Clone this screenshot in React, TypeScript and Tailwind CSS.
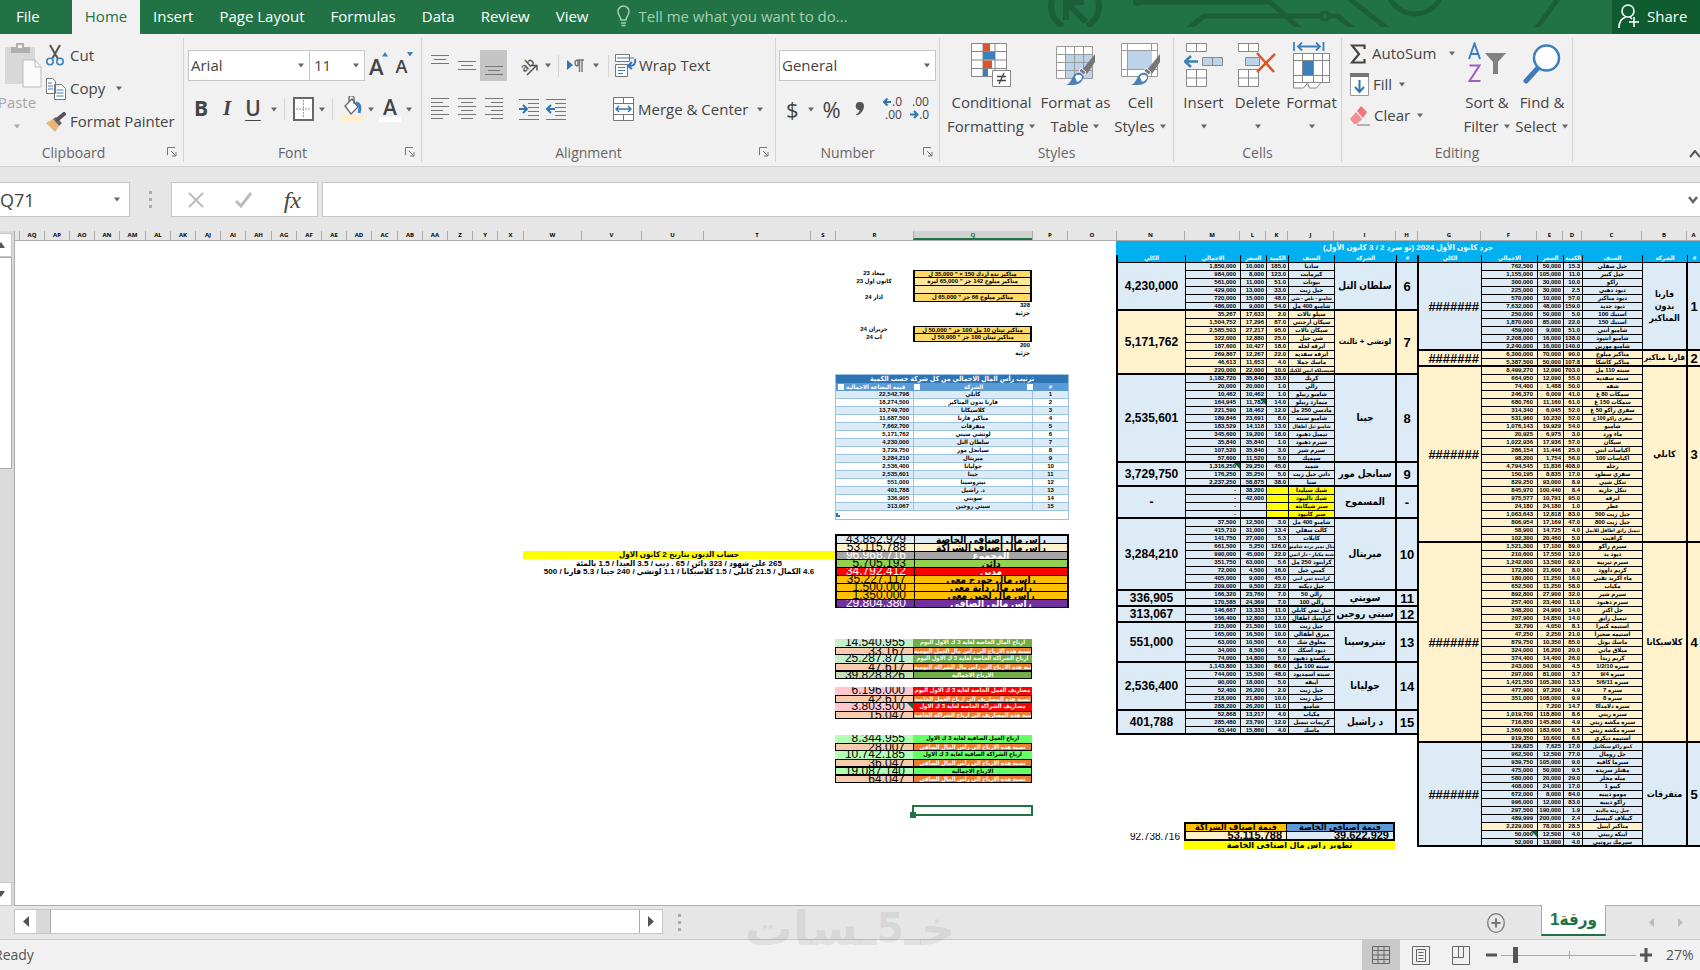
import React from "react"
import { clsx } from "clsx"

type Item = [string, string, string, string]

type Group = {
  id: string
  name: string
  total: string
  tone: "blue" | "sand"
  rows: Item[]
}

const tabs = ["Insert", "Page Layout", "Formulas", "Data", "Review", "View"]

const mainGroups: Group[] = [
  {
    id: "1", name: "فارنا\nبدون\nالمناكير", total: "#######", tone: "blue",
    rows: [
      ["762,500", "50,000", "15.3", "جيل سفلي"],
      ["1,155,000", "105,000", "11.0", "جيل كبير"],
      ["300,000", "30,000", "10.0", "راكو"],
      ["225,000", "30,000", "2.5", "ديود دهبي"],
      ["570,000", "10,000", "57.0", "ديود مناكير"],
      ["7,632,000", "48,000", "159.0", "ديود جديد"],
      ["250,000", "50,000", "5.0", "استيك 100"],
      ["1,870,000", "85,000", "22.0", "استيك 150"],
      ["459,000", "9,000", "51.0", "شامبو انتي"],
      ["2,208,000", "16,000", "138.0", "شامبو انتيود"],
      ["2,240,000", "16,000", "140.0", "شامبو مورين"],
    ],
  },
  {
    id: "2", name: "فارنا مناكير", total: "#######", tone: "sand",
    rows: [
      ["6,300,000", "70,000", "90.0", "مناكير ميلوخ"],
      ["5,387,500", "50,000", "107.8", "مناكير كاشكا"],
    ],
  },
  {
    id: "3", name: "كابلي", total: "#######", tone: "sand",
    rows: [
      ["8,499,270", "12,090", "703.0", "سبته 110 مل"],
      ["664,950", "12,090", "55.0", "سبته سفديه"],
      ["74,400", "1,488", "50.0", "شفه"],
      ["246,370", "6,009", "41.0", "سمكات 80 غ"],
      ["680,760", "11,160", "61.0", "سمكات 150 غ"],
      ["314,340", "6,045", "52.0", "سفري راكو 50 غ"],
      ["531,960", "10,230", "52.0", "سفري راكو 100 غ"],
      ["1,076,143", "19,929", "54.0", "شامبو"],
      ["20,925", "6,975", "3.0", "ماء ورد"],
      ["1,022,936", "17,936", "57.0", "سيكان"],
      ["286,154", "11,446", "25.0", "اكياسات انتي"],
      ["98,200", "1,754", "56.0", "اكياسات 100"],
      ["4,794,545", "11,836", "408.0", "رجله"],
      ["150,195", "8,835", "17.0", "سفري سطود"],
      ["829,250", "93,000", "8.9", "تنكل شيي"],
      ["845,970", "100,440", "8.4", "تنكل جاريه"],
      ["975,577", "10,791", "95.0", "ايرقه"],
      ["24,180", "24,180", "1.0", "عطر"],
      ["1,063,643", "12,818", "83.0", "جيل زيت 500"],
      ["806,954", "17,169", "47.0", "جيل زيت 800"],
      ["58,900", "14,725", "4.0", "تيميل راتق اطافل للايمل"],
      ["102,300", "20,460", "5.0", "كرافيت"],
    ],
  },
  {
    id: "4", name: "كلاسيكانا", total: "#######", tone: "sand",
    rows: [
      ["1,521,300", "17,100", "89.0", "سيرم راكو"],
      ["210,600", "17,550", "12.0", "ديود يد"],
      ["1,242,000", "13,500", "92.0", "سيرم تيرييه"],
      ["172,800", "21,600", "8.0", "كريم داوود"],
      ["180,000", "11,250", "16.0", "ماء اكريد تقني"],
      ["652,500", "11,250", "58.0", "مكياب"],
      ["892,800", "27,900", "32.0", "سيرم شير"],
      ["257,400", "23,400", "11.0", "سيرم دهبود"],
      ["348,200", "24,900", "14.0", "جل اكتر"],
      ["207,900", "14,850", "14.0", "تيميل رايق"],
      ["32,790", "4,050", "8.1", "استيمه كبيرا"],
      ["47,250", "2,250", "21.0", "استيمه صغيرا"],
      ["879,750", "10,350", "85.0", "ماسك بوتل"],
      ["324,000", "16,200", "20.0", "ميلاق ماتي"],
      ["374,400", "14,400", "26.0", "كريم زبدا"],
      ["243,000", "54,000", "4.5", "سبره 1/2/10"],
      ["297,000", "81,000", "3.7", "سبره 9/4"],
      ["1,421,550", "105,300", "13.5", "سبره 5/6/11"],
      ["477,900", "97,200", "4.9", "سبره 7"],
      ["351,000", "108,000", "9.9", "سبره 8"],
      ["", "7,200", "14.7", "سبره دلامدا8"],
      ["1,019,700", "118,800", "8.6", "سبره زيتي"],
      ["716,850", "145,800", "4.9", "سبره مكشه زيتي"],
      ["1,560,600", "183,600", "8.5", "سبره مكشه زيتي"],
      ["919,350", "10,600", "6.6", "استيمه ديكري"],
    ],
  },
  {
    id: "5", name: "متفرقات", total: "#######", tone: "blue",
    rows: [
      ["129,625", "7,625", "17.0", "كيبو راكو سيكاتيل"],
      ["962,500", "12,500", "77.0", "جل رومال"],
      ["939,750", "105,000", "9.0", "سيرما كافيه"],
      ["475,000", "50,000", "9.5", "مقتلز سريده"],
      ["580,000", "20,000", "29.0", "ميله مخلر"],
      ["408,000", "24,000", "17.0", "كيبو 1"],
      ["672,000", "8,000", "84.0", "مومو ديبيه"],
      ["996,000", "12,000", "83.0", "راكو ديبيه"],
      ["297,500", "190,000", "1.9", "جيل زيته ماليبه"],
      ["489,999", "200,000", "2.4", "كيبلاف كبيسيل"],
      ["2,229,000", "78,000", "28.5", "مناكير ايبيل"],
      ["50,000", "12,500", "4.0", "ايبكه ربيتي"],
      ["52,000", "13,000", "4.0", "سيرمك بروتيي"],
    ],
  },
]

const sideGroups: Group[] = [
  {
    id: "6", name: "سلطان التل", total: "4,230,000", tone: "blue",
    rows: [
      ["1,850,000", "10,000", "185.0", "ساديا"],
      ["984,000", "8,000", "123.0", "كيرمايت"],
      ["561,000", "11,000", "51.0", "بيوتات"],
      ["429,000", "13,000", "33.0", "جيل زيت"],
      ["720,000", "15,000", "48.0", "شامبو - بلص - شي"],
      ["486,000", "9,000", "54.0", "شامبو 400 مل"],
    ],
  },
  {
    id: "7", name: "لوتشي + تالنت", total: "5,171,762", tone: "sand",
    rows: [
      ["35,267", "17,633", "2.0", "سيلو تالات"],
      ["1,504,752", "17,296", "87.0", "سيكان ارجنتي"],
      ["2,585,503", "27,217", "95.0", "سيكان تالات"],
      ["322,000", "12,880", "25.0", "شي جيل"],
      ["187,600", "10,427", "18.0", "ايرقه لجله"],
      ["269,867", "12,267", "22.0", "ايرقه سفديه"],
      ["46,613", "11,653", "4.0", "ماسك جملا"],
      ["220,000", "22,000", "10.0", "سيسيلكة ايمن للكيك"],
    ],
  },
  {
    id: "8", name: "جينا", total: "2,535,601", tone: "blue",
    rows: [
      ["1,182,720", "35,840", "33.0", "كريك"],
      ["20,000", "20,000", "1.0", "رالي"],
      ["10,462", "10,462", "1.0", "شامبو ربيلو"],
      ["164,945", "11,782", "14.0", "ميمارد ربيلو"],
      ["221,590", "18,462", "12.0", "مادسي 250 مل"],
      ["189,846", "23,691", "8.0", "شامبو سبته"],
      ["183,529", "14,118", "13.0", "شامبو تيل اطفال"],
      ["345,600", "19,200", "18.0", "تيميل دهبود"],
      ["35,840", "35,840", "1.0", "سيرم دهبود"],
      ["107,520", "35,840", "3.0", "سيرم شير"],
      ["57,600", "11,520", "5.0", "سيميك"],
    ],
  },
  {
    id: "9", name: "سيانجل مور", total: "3,729,750", tone: "blue",
    rows: [
      ["1,316,250", "29,250", "45.0", "شميد"],
      ["176,250", "35,250", "5.0", "داتي جيل زيت"],
      ["2,237,250", "58,875", "38.0", "سبا"],
    ],
  },
  {
    id: "-", name: "المسموح", total: "-", tone: "blue",
    rows: [
      ["-", "38,200", "", "شيك سيليدا"],
      ["-", "42,000", "", "شيك تالييود"],
      ["-", "", "", "سبر شيكابته"],
      ["-", "", "", "سبر كابيود"],
    ],
  },
  {
    id: "10", name: "ميريتال", total: "3,284,210", tone: "blue",
    rows: [
      ["37,500", "12,500", "3.0", "شامبو 400 مل"],
      ["415,710", "31,000", "13.4", "كالت سفلي"],
      ["141,750", "27,000", "5.3", "كابلات"],
      ["661,500", "5,250", "126.0", "ميتال نمير برده شامبو"],
      ["990,000", "45,000", "22.0", "شبه مكياز - دار انمي"],
      ["351,750", "63,000", "5.6", "كرابتود 250 مل"],
      ["72,000", "4,500", "16.0", "كمبي جيل"],
      ["405,000", "9,000", "45.0", "كرابيده تمي انبي"],
      ["209,000", "9,500", "22.0", "جيل ديكته"],
    ],
  },
  {
    id: "11", name: "سويتي", total: "336,905", tone: "blue",
    rows: [
      ["166,320", "23,760", "7.0", "رالي 50"],
      ["170,585", "24,369", "7.0", "رالي 100"],
    ],
  },
  {
    id: "12", name: "سيتي روجين", total: "313,067", tone: "blue",
    rows: [
      ["146,667", "13,333", "11.0", "جيل تمي كابلي"],
      ["166,400", "12,800", "13.0", "كرابتيك اطفال"],
    ],
  },
  {
    id: "13", name: "نيتروسينا", total: "551,000", tone: "blue",
    rows: [
      ["215,000", "21,500", "10.0", "جيل زيت"],
      ["165,000", "16,500", "10.0", "ميزق اطفالي"],
      ["63,000", "10,500", "6.0", "معلوق شك"],
      ["34,000", "8,500", "4.0", "ديود اسكك"],
      ["74,000", "14,800", "5.0", "ميكسدو دهبود"],
    ],
  },
  {
    id: "14", name: "جوليانا", total: "2,536,400", tone: "blue",
    rows: [
      ["1,143,800", "13,300", "86.0", "سبته 100 مل"],
      ["744,000", "15,500", "48.0", "سبته اسمديود"],
      ["90,000", "18,000", "5.0", "ايبقه"],
      ["52,400", "26,200", "2.0", "جيل زيت"],
      ["218,000", "21,800", "10.0", "جيل زيت"],
      ["288,200", "26,200", "11.0", "شامبو"],
    ],
  },
  {
    id: "15", name: "د راشيل", total: "401,788", tone: "blue",
    rows: [
      ["52,868", "13,217", "4.0", "مكياب"],
      ["285,480", "23,790", "12.0", "كريمات تيميل"],
      ["63,440", "15,860", "4.0", "ماسك"],
    ],
  },
]

const companies: [string, string][] = [
  ["22,542,798", "كابلي"],
  ["18,274,500", "فارنا بدون المناكير"],
  ["13,749,700", "كلاسيكانا"],
  ["11,687,500", "مناكير فارنا"],
  ["7,662,700", "متفرقات"],
  ["5,171,762", "لوتشي سيتي"],
  ["4,230,000", "سلطان التل"],
  ["3,729,750", "سيانجل مور"],
  ["3,284,210", "ميريتال"],
  ["2,536,400", "جوليانا"],
  ["2,535,601", "جينا"],
  ["551,000", "نيتروسينا"],
  ["401,788", "د. راشيل"],
  ["336,905", "سويتي"],
  ["313,067", "سيتي روجين"],
]

const deals: { note: string; text: string; kind: "gold" | "sand" | "plain" }[] = [
  { note: "23 ميعاد", text: "مناكير نده اردك 150 × \" 35,000 ل", kind: "gold" },
  { note: "23 كانون اول", text: "مناكير ميلوخ 142 جز \" 65,000 ليرة", kind: "sand" },
  { note: "", text: "", kind: "sand" },
  { note: "24 اذار", text: "مناكير ميلوخ 66 جز \" 65,000 ل", kind: "gold" },
  { note: "", text: "328", kind: "plain" },
  { note: "", text: "جزئية", kind: "plain" },
  { note: "", text: "", kind: "plain" },
  { note: "24 حزيران", text: "مناكير تيتان 10 مل 100 جز \" 50,000 ل", kind: "gold" },
  { note: "24 اب", text: "مناكير تيتان 100 جز \" 50,000 ل", kind: "gold" },
  { note: "", text: "200", kind: "plain" },
  { note: "", text: "جزئية", kind: "plain" },
]

const capital = [
  { value: "43,852,929", label: "رأس مال اصنافي الخاصة", tone: "bg-[#ddebf7] text-black" },
  { value: "53,115,788", label: "رأس مال اصناف الشراكة", tone: "bg-[#fff2cc] text-black" },
  { value: "96,968,716", label: "المجموع", tone: "bg-[#a6a6a6] text-white" },
  { value: "5,705,193", label: "دائن", tone: "bg-[#92d050] text-black" },
  { value: "34,792,412", label: "مدين", tone: "bg-[#ff0000] text-white" },
  { value: "35,227,117", label: "رأس مال جورج معي", tone: "bg-[#ffc000] text-black" },
  { value: "1,500,000", label: "رأس مال دانة معي", tone: "bg-[#ffc000] text-black" },
  { value: "1,350,000", label: "رأس مال لجين معي", tone: "bg-[#ffc000] text-black" },
  { value: "29,804,380", label: "رأس مالي الصافي", tone: "bg-[#7030a0] text-white" },
]

type Profit = { value: string; label: string; left: string; right: string; boxed?: boolean; flag?: boolean }

const orange = "bg-[#ed7d31] text-white"
const peach = "bg-[#f8cbad]"

const yearly: Profit[] = [
  { value: "14,540,955", label: "ارباح المال الخاصة لغاية 3 ك الاول اليوم", left: "bg-[#c6efce]", right: "bg-[#70ad47] text-white" },
  { value: "33,167", label: "نسبة هذه الارباح الى رأس مال العمل اليومية", left: peach, right: orange, boxed: true },
  { value: "25,287,871", label: "ارباح الشراكة الخاصة لغاية 3 ك الاول اليوم", left: "bg-[#c6efce]", right: "bg-[#70ad47] text-white" },
  { value: "47,617", label: "نسبة هذه الارباح الى رأس مال الشراكة اليومية", left: peach, right: orange, boxed: true },
  { value: "39,828,826", label: "الارباح الاجمالية", left: "bg-[#c6e0b4]", right: "bg-[#70ad47] text-white", boxed: true },
]

const expenses: Profit[] = [
  { value: "6,196,000", label: "مصاريف العمل الخاصة لغاية 3 ك الاول اليوم", left: "bg-[#ffc7ce]", right: "bg-[#ff0000] text-white" },
  { value: "42,617", label: "نسبة هذه المصاريف الى ارباح العمل الخاصة", left: peach, right: orange, boxed: true },
  { value: "3,803,500", label: "مصاريف الشراكة الخاصة لغاية 3 ك الاول", left: "bg-[#ffc7ce]", right: "bg-[#ff0000] text-white", flag: true },
  { value: "15,047", label: "نسبة هذه المصاريف الى ارباح الشراكة الخاصة", left: peach, right: orange, boxed: true },
]

const net: Profit[] = [
  { value: "8,344,955", label: "ارباح العمل الصافية لغاية 3 ك الاول", left: "bg-[#b3ffb3]", right: "bg-[#66ff66] text-black" },
  { value: "28,007", label: "نسبة هذه الارباح الى رأس المال الصافي", left: peach, right: orange, boxed: true },
  { value: "10,742,185", label: "ارباح الشراكة الصافية لغاية 3 ك الاول", left: "bg-[#b3ffb3]", right: "bg-[#66ff66] text-black" },
  { value: "36,047", label: "نسبة هذه الارباح الى رأس المال الصافي", left: peach, right: orange, boxed: true },
  { value: "19,087,140", label: "الارباح الاجمالية", left: "bg-[#b3ffb3]", right: "bg-[#66ff66] text-black", boxed: true },
  { value: "64,047", label: "نسبة هذه الارباح الى رأس المال الصافي", left: peach, right: orange, boxed: true },
]

// Sheet runs right to left, so the widths are listed from AQ down to A
const columns: [string, string][] = [
  ["AQ", "w-[25px]"], ["AP", "w-[25px]"], ["AO", "w-[25px]"], ["AN", "w-[25px]"], ["AM", "w-[26px]"],
  ["AL", "w-[25px]"], ["AK", "w-[25px]"], ["AJ", "w-[25px]"], ["AI", "w-[25px]"], ["AH", "w-[26px]"],
  ["AG", "w-[25px]"], ["AF", "w-[25px]"], ["AE", "w-[25px]"], ["AD", "w-[25px]"], ["AC", "w-[26px]"],
  ["AB", "w-[25px]"], ["AA", "w-[25px]"], ["Z", "w-[25px]"], ["Y", "w-[25px]"], ["X", "w-[26px]"],
  ["W", "w-[58px]"], ["V", "w-[60px]"], ["U", "w-[62px]"], ["T", "w-[107px]"], ["S", "w-[25px]"],
  ["R", "w-[78px]"], ["Q", "w-[119px]"], ["P", "w-[35px]"], ["O", "w-[49px]"], ["N", "w-[68px]"],
  ["M", "w-[55px]"], ["L", "w-[26px]"], ["K", "w-[22px]"], ["J", "w-[46px]"], ["I", "w-[62px]"],
  ["H", "w-[22px]"], ["G", "w-[63px]"], ["F", "w-[56px]"], ["E", "w-[26px]"], ["D", "w-[19px]"],
  ["C", "w-[60px]"], ["B", "w-[45px]"], ["A", "w-[14px]"],
]

function Caret({ className = "" }: { className?: string }) {
  return (
    <svg width="8" height="5" viewBox="0 0 8 5" className={clsx("shrink-0", className)}>
      <path d="M1 0.5h6L4 4.5z" fill="#666" />
    </svg>
  )
}

function Rule() {
  return <span className="h-[22px] w-px bg-[#d4d4d4]" />
}

function RibbonGroup({ label, width, shift, launcher, children }: { label: string; width: string; shift?: string; launcher?: boolean; children: React.ReactNode }) {
  return (
    <section className={clsx("mt-1 flex h-[124px] shrink-0 flex-col border-r border-[#d4d4d4]", width)}>
      <div className="h-[107px]">{children}</div>
      <div className={clsx("relative text-center text-sm leading-[19px] text-[#666]", shift)}>
        {label}
        {launcher && (
          <button aria-label={label + " settings"} className="absolute right-1.5 top-1">
            <svg width="10" height="10" viewBox="0 0 10 10" fill="none" stroke="#777">
              <path d="M0.5 8V0.5H8M4 4l5 5M9 5v4H5" />
            </svg>
          </button>
        )}
      </div>
    </section>
  )
}

function BigButton({ icon, lines, width, caretBelow }: { icon: React.ReactNode; lines: string[]; width: string; caretBelow?: boolean }) {
  return (
    <button className={clsx("flex shrink-0 flex-col items-center whitespace-nowrap leading-6", width)}>
      <span className="flex h-[52px] items-start pt-1">{icon}</span>
      <span>{lines[0]}</span>
      {caretBelow ? (
        <Caret className="mt-2.5" />
      ) : (
        <span className="flex items-center gap-1">
          {lines[1]}
          <Caret />
        </span>
      )}
    </button>
  )
}

function Lines({ widths, align = "center" }: { widths: number[]; align?: "left" | "center" | "right" }) {
  return (
    <svg width="18" height={widths.length * 4} viewBox={`0 0 18 ${widths.length * 4}`} stroke="#777">
      {widths.map((w, i) => {
        const x = align === "left" ? 0 : align === "right" ? 18 - w : (18 - w) / 2
        return <path key={i} d={`M${x} ${i * 4 + 1.5}h${w}`} />
      })}
    </svg>
  )
}

function TitleBar() {
  return (
    <header className="relative flex h-[34px] items-stretch bg-[#217346] text-[15px] text-white">
      <svg width="560" height="27" viewBox="1040 0 560 27" className="absolute right-[100px] top-0" fill="none" stroke="#1b5f39" strokeWidth="5">
        <path d="M1063 26A22 22 0 0 1 1052 0M1087 26A22 22 0 0 0 1098 0" strokeWidth="6" />
        <path d="M1086 22L1068 4M1066 20V2H1084" strokeWidth="6" />
        <circle cx="1137" cy="2" r="4" fill="#1b5f39" stroke="none" />
        <path d="M1137 2H1270L1300 29M1188 29L1204 16H1321M1330 16H1338L1353 29M1346 -4L1388 29M1560 -4L1536 29" />
        <circle cx="1325" cy="16" r="4" strokeWidth="3" />
        <circle cx="1415" cy="-14" r="28" />
      </svg>
      <button className="w-[72px] pb-0.5 pl-4 text-left">File</button>
      <button className="w-[68px] bg-[#f1f1f1] pb-0.5 text-[#217346]">Home</button>
      {tabs.map((t) => (
        <button key={t} className="px-[13px] pb-0.5">{t}</button>
      ))}
      <button className="ml-4 flex items-center gap-2 pb-0.5 text-[#a8cdb7]">
        <svg width="13" height="22" viewBox="0 0 13 22" fill="none" stroke="#a8cdb7" strokeWidth="1.5">
          <path d="M4 15c0-3-3-4.500-3-8.500a5.500 5.500 0 0 1 11 0c0 4-3 5.500-3 8.500zM4 18h5M4.500 20.500h4" />
        </svg>
        Tell me what you want to do...
      </button>
      <button className="relative ml-auto flex w-[88px] items-center gap-2 bg-[#0e5c2f] pb-0.5 pl-1.5">
        <svg width="21" height="25" viewBox="0 0 21 25" fill="none" stroke="#fff" strokeWidth="1.600">
          <circle cx="10" cy="7" r="6" />
          <path d="M1 24c0-6 3-10 7-11M12 13l2 2M16 13v10M11 18h10" />
        </svg>
        Share
      </button>
    </header>
  )
}

function ClipboardGroup() {
  return (
    <RibbonGroup label="Clipboard" width="w-[184px]" shift="pr-9" launcher>
      <div className="flex">
        <button className="flex w-[46px] shrink-0 flex-col items-center pt-1 leading-6 text-[#a6a6a6]">
          <svg width="38" height="48" viewBox="0 0 38 48">
            <path d="M1 5h30v37H1z" fill="#d8d8d8" />
            <path d="M7 5h5V1h8v4h6v6H7z" fill="#b0b0b0" />
            <path d="M14 3h4v3h-4z" fill="#f1f1f1" />
            <path d="M19 18h12l6 7v20H19z" fill="#fafafa" stroke="#bdbdbd" />
            <path d="M31 18v7h6" fill="none" stroke="#bdbdbd" />
          </svg>
          <span className="-ml-3">Paste</span>
          <Caret className="-ml-3 mt-2.5 opacity-50" />
        </button>
        <div className="flex flex-col whitespace-nowrap">
          <button className="flex h-[34px] items-center gap-1.5">
            <svg width="18" height="22" viewBox="0 0 18 22" fill="none">
              <path d="M4 1l8 14M14 1L6 15" stroke="#555" strokeWidth="2" />
              <circle cx="4" cy="17.500" r="3.200" stroke="#3b7fbd" strokeWidth="1.500" />
              <circle cx="14" cy="17.500" r="3.200" stroke="#3b7fbd" strokeWidth="1.500" />
            </svg>
            Cut
          </button>
          <button className="flex h-[33px] items-center gap-1">
            <svg width="20" height="22" viewBox="0 0 20 22" fill="#fff" stroke="#777">
              <path d="M0.500 0.500h6l3 3v12h-9zM8.500 6.500h7l4 4v11h-11z" />
              <path d="M2 5h4M2 8h5M2 11h5M10.500 12h7M10.500 15h7M10.500 18h7" stroke="#3b7fbd" />
            </svg>
            Copy
            <Caret className="ml-1.5" />
          </button>
          <button className="flex h-[33px] items-center gap-1">
            <svg width="20" height="20" viewBox="0 0 20 20">
              <path d="M0 11l7-4 6 7-4 6z" fill="#eab676" />
              <path d="M7 7l3-2 6 6-3 3z" fill="#666" />
              <path d="M12 7l6-5" stroke="#555" strokeWidth="4" strokeLinecap="round" />
            </svg>
            Format Painter
          </button>
        </div>
      </div>
    </RibbonGroup>
  )
}

function FontGroup() {
  return (
    <RibbonGroup label="Font" width="w-[238px]" shift="pr-5" launcher>
      <div className="flex items-center pl-1 pt-3">
        <label className="relative flex h-[31px] w-[122px] items-center border border-[#c6c6c6] bg-white">
          <select aria-label="Font name" className="w-full appearance-none bg-transparent pl-0.5 outline-none"><option>Arial</option></select>
          <Caret className="absolute right-1" />
        </label>
        <label className="relative flex h-[31px] w-[55px] items-center border border-l-0 border-[#c6c6c6] bg-white">
          <select aria-label="Font size" className="w-full appearance-none bg-transparent pl-1 outline-none"><option>11</option></select>
          <Caret className="absolute right-1" />
        </label>
        <button aria-label="Grow font" className="relative ml-1 text-[22px] font-semibold leading-7">
          A<svg width="6" height="5" viewBox="0 0 6 5" className="absolute -right-1 top-0"><path d="M0 4.500L3 0l3 4.500z" fill="#3b7fbd" /></svg>
        </button>
        <button aria-label="Shrink font" className="relative ml-3 text-lg font-semibold leading-7">
          A<svg width="6" height="5" viewBox="0 0 6 5" className="absolute -right-1.5 top-0"><path d="M0 0h6L3 4.500z" fill="#3b7fbd" /></svg>
        </button>
      </div>
      <div className="flex h-14 items-center pl-2 text-[21px]">
        <button className="w-[18px] font-bold">B</button>
        <button className="ml-2 w-[18px] font-['Liberation_Serif'] font-bold italic">I</button>
        <button className="ml-2 w-[18px] font-semibold underline decoration-1 underline-offset-4">U</button>
        <Caret className="ml-2 mr-1.5" />
        <Rule />
        <button aria-label="Borders" className="ml-2">
          <svg width="21" height="24" viewBox="0 0 21 24" fill="#fff">
            <path d="M1 1h19v22H1z" stroke="#666" strokeWidth="2" />
            <path d="M10.500 3v18M3 12h15" stroke="#999" strokeDasharray="2 1" />
          </svg>
        </button>
        <Caret className="ml-1 mr-1.5" />
        <Rule />
        <button aria-label="Fill color" className="ml-2">
          <svg width="22" height="26" viewBox="0 0 22 26" fill="none">
            <path d="M0 19h22v6H0z" fill="#fdf0c8" />
            <path d="M4 10l7-7 6 8-7 7z" fill="#fff" stroke="#666" strokeWidth="1.300" />
            <path d="M8 6V2a2.500 2.500 0 0 1 5 0v6" stroke="#666" strokeWidth="1.300" />
            <path d="M15 7c4 1 5 4 3 10" stroke="#3b7fbd" strokeWidth="3" />
          </svg>
        </button>
        <Caret className="ml-1 mr-1" />
        <button aria-label="Font color" className="flex w-[22px] flex-col items-center border-b-[5px] border-white font-semibold leading-5">A</button>
        <Caret className="ml-1" />
      </div>
    </RibbonGroup>
  )
}

function IndentIcon({ flip }: { flip?: boolean }) {
  return (
    <svg width="21" height="23" viewBox="0 0 21 23" fill="none">
      <path d="M0 1.500h20M9 5.500h11M9 9.500h11M9 13.500h11M9 17.500h11M0 21.500h20" stroke="#777" />
      <path d={flip ? "M9 11H2M5 7l-4 4 4 4" : "M0 11h7M4 7l4 4-4 4"} stroke="#2f75b5" strokeWidth="2" />
    </svg>
  )
}

function AlignmentGroup() {
  return (
    <RibbonGroup label="Alignment" width="w-[354px]" shift="pr-5" launcher>
      <div className="mt-3 flex h-[31px] items-center pl-1">
        <button aria-label="Top align" className="flex h-full w-[27px] justify-center pt-1"><Lines widths={[18, 12, 18]} /></button>
        <button aria-label="Middle align" className="flex h-full w-[27px] items-center justify-center"><Lines widths={[18, 12, 18]} /></button>
        <button aria-label="Bottom align" className="flex h-full w-[27px] items-end justify-center bg-[#c5c5c5] pb-1"><Lines widths={[18, 12, 18]} /></button>
        <span className="ml-1"><Rule /></span>
        <button aria-label="Orientation" className="ml-2">
          <svg width="21" height="20" viewBox="0 0 21 20">
            <text x="1" y="13" fontSize="12" fontFamily="Open Sans" fontWeight="600" fill="#555" transform="rotate(-42 8 9)">ab</text>
            <path d="M8 19l9-9M12 9.500h6v5" fill="none" stroke="#555" strokeWidth="1.500" />
          </svg>
        </button>
        <Caret className="ml-1 mr-1.5" />
        <Rule />
        <button aria-label="Text direction" className="ml-2">
          <svg width="17" height="14" viewBox="0 0 17 14">
            <path d="M0 1l6 5-6 5z" fill="#2f75b5" />
            <path d="M11 7a3 3 0 0 1 0-6h6M12.500 1v12M15 1v12M11 1v6" fill="none" stroke="#777" strokeWidth="1.400" />
          </svg>
        </button>
        <Caret className="ml-2 mr-2" />
        <Rule />
        <button className="ml-1.5 flex items-center gap-0.5 whitespace-nowrap">
          <svg width="22" height="23" viewBox="0 0 22 23" fill="none">
            <path d="M0.500 0.500h14v7h-14zM0.500 10.500h12v12h-12z" fill="#fff" stroke="#777" />
            <path d="M2 4h17M3 13.500h7M3 16.500h7M3 19.500h5" stroke="#3b7fbd" />
            <path d="M20 5c1 5-1 7-6 7M17 8l-4 4 4 3" stroke="#2f75b5" strokeWidth="2" />
          </svg>
          Wrap Text
        </button>
      </div>
      <div className="mt-4 flex items-center pl-1">
        <button aria-label="Align left" className="flex w-[27px] justify-center"><Lines align="left" widths={[18, 12, 18, 12, 18, 12]} /></button>
        <button aria-label="Center" className="flex w-[27px] justify-center"><Lines widths={[18, 12, 18, 12, 18, 12]} /></button>
        <button aria-label="Align right" className="flex w-[27px] justify-center"><Lines align="right" widths={[18, 12, 18, 12, 18, 12]} /></button>
        <span className="ml-1"><Rule /></span>
        <button aria-label="Increase indent" className="ml-2"><IndentIcon /></button>
        <button aria-label="Decrease indent" className="ml-1.5"><IndentIcon flip /></button>
        <span className="ml-10"><Rule /></span>
        <button className="ml-1.5 flex items-center gap-1 whitespace-nowrap">
          <svg width="21" height="24" viewBox="0 0 21 24" fill="none">
            <path d="M0.500 0.500h20v23h-20zM0.500 6.500h20M0.500 17.500h20M10.500 0v6M10.500 18v6" fill="#fff" stroke="#777" />
            <path d="M3 12h15M6 9l-3 3 3 3M15 9l3 3-3 3" stroke="#2f75b5" strokeWidth="1.400" />
          </svg>
          Merge &amp; Center
          <Caret className="ml-1" />
        </button>
      </div>
    </RibbonGroup>
  )
}

function DecimalIcon({ less }: { less?: boolean }) {
  return (
    <svg width="21" height="26" viewBox="0 0 21 26" fontFamily="Open Sans" fontSize="12" fill="#444">
      <text x={less ? 2 : 9} y="10">{less ? ".00" : ".0"}</text>
      <text x={less ? 9 : 2} y="23">{less ? ".0" : ".00"}</text>
      <path d={less ? "M0 18.500h7M4 15l3.500 3.500L4 22" : "M8 6H1M4.500 2.500L1 6l3.500 3.500"} fill="none" stroke="#2f75b5" strokeWidth="2" />
    </svg>
  )
}

function NumberGroup() {
  return (
    <RibbonGroup label="Number" width="w-[164px]" shift="pr-5" launcher>
      <div className="px-[3px] pt-3">
        <label className="relative flex h-[31px] items-center border border-[#c6c6c6] bg-white">
          <select aria-label="Number format" className="w-full appearance-none bg-transparent pl-0.5 outline-none"><option>General</option></select>
          <Caret className="absolute right-1" />
        </label>
      </div>
      <div className="flex h-14 items-center pl-2.5 text-[22px]">
        <button>$</button>
        <Caret className="ml-2 mr-1.5" />
        <button className="w-[22px]">%</button>
        <button aria-label="Comma style" className="ml-3">
          <svg width="10" height="14" viewBox="0 0 10 14"><path d="M5 0a4 4 0 0 1 4 4c0 4-3 8-7 9.500l-1-1c2.500-1.500 3.500-3 3.500-4.500A4 4 0 0 1 5 0z" fill="#555" /></svg>
        </button>
        <span className="ml-2.5"><Rule /></span>
        <button aria-label="Increase decimal" className="ml-2"><DecimalIcon /></button>
        <button aria-label="Decrease decimal" className="ml-1.5"><DecimalIcon less /></button>
      </div>
    </RibbonGroup>
  )
}

function Brush() {
  return (
    <g>
      <path d="M39 12v8l-8 12-5-4z" fill="#777" />
      <path d="M25 26l5 4-2 3-5-4z" fill="#777" stroke="#f1f1f1" />
      <path d="M10 43c5-2 5-6 8-10 3-3 8-3 9 1 1 5-4 9-10 9z" fill="#4a7fb8" />
      <path d="M19 35c1-3 6-3 7 0 0 2-2 4-5 5z" fill="#fff" />
    </g>
  )
}

function StylesGroup() {
  return (
    <RibbonGroup label="Styles" width="w-[234px]">
      <div className="flex justify-center gap-0">
        <BigButton
          width="w-[92px]"
          lines={["Conditional", "Formatting"]}
          icon={
            <svg width="41" height="46" viewBox="0 0 41 46">
              <path d="M0.500 1.500h35v33h-35zM0.500 9.500h35M0.500 18h35M0.500 26.500h35M12 1v33M24 1v33" fill="#fff" stroke="#888" />
              <path d="M12 2h7v7h-7zM12 18.500h9v7.500h-9z" fill="#d9562b" />
              <path d="M12 10h12v7.500H12zM12 27h5v7h-5z" fill="#3b7fbd" />
              <path d="M21.500 28.500h18v16h-18z" fill="#fff" stroke="#888" />
              <path d="M26 34.500h9M26 38.500h9M33 31l-5 11" stroke="#444" strokeWidth="1.300" />
            </svg>
          }
        />
        <BigButton
          width="w-[76px]"
          lines={["Format as", "Table"]}
          icon={
            <svg width="40" height="46" viewBox="0 0 40 46">
              <path d="M0.500 4.500h36v32h-36z" fill="#fff" />
              <path d="M10 12h27v24H10z" fill="#bdd3ea" />
              <path d="M0.500 4.500h36v32h-36zM0.500 12.500h36M0.500 20.500h36M0.500 28.500h36M9.500 4v32M18.500 4v32M27.500 4v32" fill="none" stroke="#999" />
              <Brush />
            </svg>
          }
        />
        <BigButton
          width="w-[54px]"
          lines={["Cell", "Styles"]}
          icon={
            <svg width="40" height="46" viewBox="0 0 40 46">
              <path d="M0.500 1.500h36v33h-36zM0.500 8.500h36M0.500 27.500h36M6.500 1v33M30.500 1v33" fill="#fff" stroke="#999" />
              <path d="M7 9h24v18H7z" fill="#bdd3ea" />
              <Brush />
            </svg>
          }
        />
      </div>
    </RibbonGroup>
  )
}

function CellsGroup() {
  return (
    <RibbonGroup label="Cells" width="w-[168px]">
      <div className="flex justify-center">
        <BigButton
          width="w-[54px]"
          caretBelow
          lines={["Insert"]}
          icon={
            <svg width="39" height="46" viewBox="0 0 39 46" fill="#fff" stroke="#888">
              <path d="M2.500 1.500h20v8h-20zM12.500 1.500v8M2.500 27.500h20v17h-20zM12.500 27.500v17M2.500 36h20" />
              <path d="M18.500 15.500h20v8h-20zM28.500 15.500v8" fill="#bdd3ea" />
              <path d="M14 19.500H2M7 14l-6 5.500 6 5.500" fill="none" stroke="#3b7fbd" strokeWidth="2.500" />
            </svg>
          }
        />
        <BigButton
          width="w-[54px]"
          caretBelow
          lines={["Delete"]}
          icon={
            <svg width="39" height="46" viewBox="0 0 39 46" fill="#fff" stroke="#888">
              <path d="M0.500 1.500h20v8h-20zM10.500 1.500v8M0.500 27.500h20v17h-20zM10.500 27.500v17M0.500 36h20" />
              <path d="M7.500 15.500h14v8h-14z" fill="#bdd3ea" />
              <path d="M19 11l17 19M37 12L19 30" fill="none" stroke="#d9562b" strokeWidth="2.500" />
            </svg>
          }
        />
        <BigButton
          width="w-[54px]"
          caretBelow
          lines={["Format"]}
          icon={
            <svg width="38" height="48" viewBox="0 0 38 48" fill="none" stroke="#888">
              <path d="M0.500 11.500h36v29h-36zM0.500 18.500h36M0.500 33.500h36M9.500 11v29M20.500 11v29M29.500 11v29M0.500 40v6h10l4-5 2 5h7l4-5" fill="#fff" />
              <path d="M10 19h10v14H10z" fill="#3b7fbd" stroke="none" />
              <path d="M1 0v9M30.500 0v9M5 4.500h22M9 0.500l-4 4 4 4M23 0.500l4 4-4 4" stroke="#3b7fbd" strokeWidth="1.800" />
            </svg>
          }
        />
      </div>
    </RibbonGroup>
  )
}

function EditingGroup() {
  return (
    <RibbonGroup label="Editing" width="w-[231px]">
      <div className="flex">
        <div className="flex w-[118px] flex-col whitespace-nowrap pl-2">
          <button className="flex h-[31px] items-center gap-1.5">
            <svg width="16" height="20" viewBox="0 0 16 20" fill="none" stroke="#444" strokeWidth="2.200"><path d="M14.500 5V1.500H2L9 10 2 18.500h12.500V15" /></svg>
            AutoSum
            <Caret className="ml-1.5" />
          </button>
          <button className="flex h-[31px] items-center gap-1">
            <svg width="19" height="23" viewBox="0 0 19 23"><path d="M0.500 2.500h18v20h-18z" fill="#fff" stroke="#999" /><path d="M0 0h19v4H0z" fill="#777" /><path d="M9.500 7v12M5 14l4.500 5 4.500-5" fill="none" stroke="#2f75b5" strokeWidth="2" /></svg>
            Fill
            <Caret className="ml-0.5" />
          </button>
          <button className="flex h-[31px] items-center gap-1">
            <svg width="20" height="20" viewBox="0 0 20 20"><path d="M11 0l6 6-4 6-6-7z" fill="#f0757c" /><path d="M6 6l6 7-5 5H4l-4-5z" fill="#f28f94" /><path d="M7 19h13" stroke="#777" /></svg>
            Clear
            <Caret className="ml-0.5" />
          </button>
        </div>
        <BigButton
          width="w-[54px]"
          lines={["Sort &", "Filter"]}
          icon={
            <svg width="38" height="42" viewBox="0 0 38 42" fill="none">
              <path d="M1 17L6.500 1.500 12 17M3 12h7" stroke="#3b7fbd" strokeWidth="2" />
              <path d="M1.500 23.500h10L1.500 39h11" stroke="#9b5fc0" strokeWidth="2" />
              <path d="M17 11h21l-8 9v12h-5V20z" fill="#808080" />
            </svg>
          }
        />
        <BigButton
          width="w-[56px]"
          lines={["Find &", "Select"]}
          icon={
            <svg width="38" height="44" viewBox="0 0 38 44">
              <path d="M3 39l12-13" stroke="#4079b5" strokeWidth="5" strokeLinecap="round" />
              <circle cx="23.500" cy="16" r="12.500" fill="#fff" stroke="#3b7fbd" strokeWidth="2.500" />
            </svg>
          }
        />
      </div>
    </RibbonGroup>
  )
}

function FormulaBar() {
  return (
    <div className="flex items-center bg-[#e6e6e6] pb-[14px] pt-[15px]">
      <label className="relative flex h-[35px] w-[130px] items-center border border-l-0 border-[#c6c6c6] bg-white">
        <input aria-label="Name box" defaultValue="Q71" className="w-full text-lg outline-none" />
        <Caret className="absolute right-2" />
      </label>
      <div className="flex w-[41px] flex-col items-center gap-1">
        <span className="size-[3px] bg-[#aaa]" />
        <span className="size-[3px] bg-[#aaa]" />
        <span className="size-[3px] bg-[#aaa]" />
      </div>
      <div className="flex h-[35px] w-[147px] items-center justify-between border border-[#c6c6c6] bg-white px-4">
        <button aria-label="Cancel"><svg width="16" height="16" viewBox="0 0 16 16" stroke="#bbb" strokeWidth="2"><path d="M1 1l14 14M15 1L1 15" /></svg></button>
        <button aria-label="Enter"><svg width="18" height="16" viewBox="0 0 18 16" fill="none" stroke="#bbb" strokeWidth="3"><path d="M1 9l5 5L16 1" /></svg></button>
        <button className="font-['Liberation_Serif'] text-[24px] italic leading-6 text-[#444]">fx</button>
      </div>
      <label className="relative ml-1 flex h-[35px] flex-1 items-center border border-r-0 border-[#c6c6c6] bg-white">
        <input aria-label="Formula bar" className="w-full px-2 outline-none" />
        <svg width="10" height="8" viewBox="0 0 10 8" className="absolute right-0.5" fill="none" stroke="#666" strokeWidth="2.500"><path d="M1 1l4 5 4-5" /></svg>
      </label>
    </div>
  )
}

// One sheet row is 8px tall at this zoom; taller text is cut off by the cell
function Cell({ className, span, thick, children }: { className?: string; span?: number; thick?: boolean; children?: React.ReactNode }) {
  return (
    <td colSpan={span} className={clsx("relative h-[8px] border-black p-0", className)}>
      <div className={clsx("overflow-hidden whitespace-nowrap", thick ? "h-[6px] leading-[6px]" : "h-[7px] leading-[7px]")}>{children}</div>
    </td>
  )
}

function ErrorFlag() {
  return <span className="absolute right-0 top-0 size-1.5 bg-[#0e6b35] [clip-path:polygon(0_0,100%_0,100%_100%)]" />
}

function StockTable({ groups, cols, hashes }: { groups: Group[]; cols: string[]; hashes?: boolean }) {
  const head = ["الكلي", "الاجمالي", "السعر", "الكمية", "الصنف", "الشركة", "#"]
  return (
    <table className="w-full table-fixed border-separate border-spacing-0 border-l-2 border-black text-[6px] font-bold">
      <colgroup>{cols.map((c, i) => <col key={i} className={c} />)}</colgroup>
      <thead>
        <tr>
          {head.map((h) => (
            <th key={h} className="h-[8px] border-b border-r border-black bg-[#00b0f0] p-0 text-[6px] leading-[7px] text-white">
              <div className="h-[7px] overflow-hidden">{h}</div>
            </th>
          ))}
        </tr>
      </thead>
      <tbody>
        {groups.map((g) =>
          g.rows.map((r, i) => {
            const last = i === g.rows.length - 1
            const line = last ? "border-b-2" : "border-b"
            const fill = g.tone === "sand" ? "bg-[#fff2cc]" : "bg-[#ddebf7]"
            const rowFill = r[0] === "2,229,000" ? "bg-[#fff2cc]" : fill
            const yellow = g.id === "-" ? "bg-[#ffff00]" : rowFill
            return (
              <tr key={g.id + i}>
                {i === 0 && (
                  <td
                    rowSpan={g.rows.length}
                    className={clsx("border-b-2 border-r border-black p-0 leading-none", hashes ? "pr-0.5 text-right text-[13px]" : "text-center text-[12px]", fill)}
                  >
                    {g.total}
                  </td>
                )}
                <Cell thick={last} className={clsx(line, rowFill, "border-r pr-1 text-right")}>
                  {r[0]}
                  {(r[0] === "1,316,250" || r[0] === "50,000") && <ErrorFlag />}
                </Cell>
                <Cell thick={last} className={clsx(line, rowFill, "border-r pr-0.5 text-right")}>
                  {r[1]}
                  {r[1] === "11,782" && <ErrorFlag />}
                </Cell>
                <Cell thick={last} className={clsx(line, yellow, "border-r pr-0.5 text-right")}>{r[2]}</Cell>
                <Cell thick={last} className={clsx(line, yellow, "border-r text-center", r[3].length > 14 && "text-[5px]")}>{r[3]}</Cell>
                {i === 0 && (
                  <>
                    <td
                      rowSpan={g.rows.length}
                      className={clsx(
                        "whitespace-pre border-b-2 border-r-2 border-black p-0 text-center",
                        g.name.length > 11 && g.rows.length < 10 ? "text-[8px]" : hashes ? "text-[9px]" : "text-[10px]",
                        g.rows.length < 3 ? "leading-none" : "leading-3",
                        fill,
                      )}
                    >
                      {g.name}
                    </td>
                    <td rowSpan={g.rows.length} className={clsx("border-b-2 border-r-2 border-black p-0 text-center text-[13px] leading-none", fill)}>{g.id}</td>
                  </>
                )}
              </tr>
            )
          }),
        )}
      </tbody>
    </table>
  )
}

function ProfitTable({ rows, className }: { rows: Profit[]; className?: string }) {
  return (
    <table className={clsx("w-[197px] table-fixed border-separate border-spacing-0", className)}>
      <colgroup><col className="w-[78px]" /><col className="w-[119px]" /></colgroup>
      <tbody>
        {rows.map((r, i) => (
          <tr key={i}>
            <Cell thick={r.boxed} className={clsx(r.left, r.boxed ? "border-y border-l" : "border-b border-transparent", "pr-2 text-right text-[12px]")}>
              {r.value}
              {r.flag && <ErrorFlag />}
            </Cell>
            <Cell thick={r.boxed} className={clsx(r.right, r.boxed ? "border" : "border-b border-transparent", "text-center text-[6px] font-bold")}>{r.label}</Cell>
          </tr>
        ))}
      </tbody>
    </table>
  )
}

function MiddleTables() {
  return (
    <div className="mr-[49px] mt-[29px] flex w-[232px] shrink-0 flex-col">
      <table className="w-[197px] table-fixed border-separate border-spacing-0 text-[6px] font-bold">
        <colgroup><col className="w-[78px]" /><col className="w-[119px]" /></colgroup>
        <tbody>
          {deals.map((d, i) => {
            const first = i === 0 || i === 7
            return (
              <tr key={i}>
                <Cell className="border-b border-transparent text-center">{d.note}</Cell>
                <Cell
                  thick={first}
                  className={clsx(
                    d.kind === "plain" ? "border-b border-transparent pr-0.5 text-right" : "border-x-2 border-b text-center",
                    d.kind === "gold" && "bg-[#ffd966]",
                    d.kind === "sand" && "bg-[#ffe699]",
                    first && "border-t",
                  )}
                >
                  <span dir="rtl">{d.text}</span>
                </Cell>
              </tr>
            )
          })}
        </tbody>
      </table>

      <table className="mt-4 w-full table-fixed border-separate border-spacing-0 border border-[#9bc2e6] text-[6px] font-bold">
        <colgroup><col className="w-[78px]" /><col className="w-[119px]" /><col className="w-[35px]" /></colgroup>
        <thead className="text-white">
          <tr className="bg-[#2e75b6]">
            <th colSpan={3} className="h-[8px] p-0 text-[7px]"><div className="h-[8px] overflow-hidden leading-[8px]">ترتيب رأس المال الاجمالي من كل شركة حسب الكمية</div></th>
          </tr>
          <tr className="bg-[#5b9bd5]">
            <th className="p-0"><div className="flex h-[8px] items-center gap-0.5 overflow-hidden whitespace-nowrap pl-0.5 leading-[8px]"><span className="size-1.5 shrink-0 bg-white" />قيمة البضاعة الاجمالية</div></th>
            <th className="p-0"><div className="flex h-[8px] items-center overflow-hidden leading-[8px]"><span className="size-1.5 bg-white" /><span className="flex-1">الشركة</span><span className="size-1.5 bg-white" /></div></th>
            <th className="p-0 leading-[8px]">#</th>
          </tr>
        </thead>
        <tbody>
          {companies.map(([value, name], i) => (
            <tr key={i} className={i % 2 ? "bg-white" : "bg-[#ddebf7]"}>
              <td className="h-[8px] border-b border-r border-[#9bc2e6] p-0 pr-1 text-right leading-[7px]">{value}</td>
              <td className="h-[8px] border-b border-r border-[#9bc2e6] p-0 text-center leading-[7px]"><div className="h-[7px]">{name}</div></td>
              <td className="h-[8px] border-b border-[#9bc2e6] p-0 text-center leading-[7px]">{i + 1}</td>
            </tr>
          ))}
          <tr><td colSpan={3} className="h-[8px] p-0"><div className="size-1 border-b-2 border-l-2 border-[#2e75b6]" /></td></tr>
        </tbody>
      </table>

      <table className="mt-3.5 w-full table-fixed border-separate border-spacing-0 border-l-2 border-t-2 border-black">
        <colgroup><col className="w-[78px]" /><col className="w-[154px]" /></colgroup>
        <tbody>
          {capital.map((c) => (
            <tr key={c.value}>
              <Cell className={clsx(c.tone, "border-b border-r pr-2 text-right text-[12px]")}>{c.value}</Cell>
              <Cell className={clsx(c.tone, "border-b border-r-2 text-center text-[10px] font-bold")}>{c.label}</Cell>
            </tr>
          ))}
        </tbody>
      </table>

      <ProfitTable rows={yearly} className="mt-[31px]" />
      <ProfitTable rows={expenses} className="mt-2" />
      <ProfitTable rows={net} className="mt-4" />
      <div className="relative ml-[77px] mt-[22px] h-[11px] w-[121px] border-2 border-[#217346]">
        <span className="absolute -bottom-1 -left-1 size-1.5 bg-[#217346]" />
      </div>
    </div>
  )
}

function Sheet() {
  return (
    <div className="flex min-w-0 flex-1 flex-col border-b border-l border-[#ababab] bg-white">
      <div className="flex h-[10px] justify-end overflow-hidden border-b border-[#ababab] bg-[#e6e6e6] text-[6px] font-bold">
        {columns.map(([name, width]) => (
          <span
            key={name}
            className={clsx(
              "shrink-0 border-l border-[#ababab] text-center leading-[9px]",
              width,
              name === "Q" ? "border-b-2 border-b-[#217346] bg-[#d2d2d2] text-[#217346]" : "text-black",
            )}
          >
            {name}
          </span>
        ))}
      </div>

      <div className="flex flex-1 justify-end overflow-hidden font-['Liberation_Sans','DejaVu_Sans_Condensed','DejaVu_Sans',sans-serif] text-black">
        <div dir="rtl" className="mt-[310px] w-[312px] shrink-0 whitespace-nowrap text-center text-[8px] font-bold leading-[8px]">
          <p className="bg-[#ffff00]">حساب الديون بتاريخ 2 كانون الاول</p>
          <p className="mt-px">265 على شهود / 323 دائن / 65 . ديب / 3.5 العيدا / 1.5 بالمئة</p>
          <p>4.6 الكمال / 21.5 كابلي / 1.5 كلاسيكانا / 1.1 لوتشي / 240 جينا / 5.3 فارنا / 500</p>
        </div>
        <MiddleTables />
        <div className="flex shrink-0 flex-col">
          <h1 dir="rtl" className="bg-[#00b0f0] text-center text-[8px] font-bold leading-[14px] text-white">جرد كانون الأول 2024 (تو سرد 2 / 3 كانون الأول)</h1>
          <div className="flex items-start">
            <div className="w-[301px]">
              <StockTable groups={sideGroups} cols={["w-[68px]", "w-[55px]", "w-[26px]", "w-[22px]", "w-[46px]", "w-[62px]", "w-[22px]"]} />
              <table className="mt-[87px] w-[279px] table-fixed border-separate border-spacing-0 text-[9px] font-bold">
                <colgroup><col className="w-[68px]" /><col className="w-[103px]" /><col className="w-[108px]" /></colgroup>
                <tbody>
                  <tr>
                    <Cell />
                    <Cell className="border-b border-l-2 border-r border-t-2 bg-[#ffc000] text-center">قيمة اصناف الشراكة</Cell>
                    <Cell className="border-b border-r-2 border-t-2 bg-[#5b9bd5] text-center">قيمة اصنافي الخاصة</Cell>
                  </tr>
                  <tr>
                    <Cell className="pr-1 text-right text-[10px] font-normal">92,738,716</Cell>
                    <Cell className="border-b-2 border-l-2 border-r bg-[#fff2cc] pr-1 text-right text-[11px]">53,115,788</Cell>
                    <Cell className="border-b-2 border-r-2 bg-[#ddebf7] pr-1 text-right text-[11px]">39,622,929</Cell>
                  </tr>
                  <tr>
                    <Cell />
                    <Cell span={2} className="bg-[#ffff00] text-center">تطوير رأس مال اصنافي الخاصة</Cell>
                  </tr>
                </tbody>
              </table>
            </div>
            <div className="w-[283px]">
              <StockTable hashes groups={mainGroups} cols={["w-[63px]", "w-[56px]", "w-[26px]", "w-[19px]", "w-[60px]", "w-[45px]", "w-[14px]"]} />
            </div>
          </div>
        </div>
      </div>
    </div>
  )
}

function BottomBar() {
  return (
    <div className="flex h-[33px] items-start bg-[#e6e6e6] pl-3.5">
      <div className="mt-[3px] flex h-[25px] w-[649px] border border-[#c6c6c6] bg-[#d9d9d9]">
        <button aria-label="Scroll left" className="flex w-[21px] items-center justify-center bg-white"><svg width="6" height="11" viewBox="0 0 6 11"><path d="M6 0v11L0 5.500z" fill="#555" /></svg></button>
        <div className="ml-3.5 flex-1 border-x border-[#ababab] bg-white" />
        <button aria-label="Scroll right" className="flex w-[22px] items-center justify-center bg-white"><svg width="6" height="11" viewBox="0 0 6 11"><path d="M0 0v11l6-5.500z" fill="#555" /></svg></button>
      </div>
      <div className="mt-2 flex w-8 flex-col items-center gap-1">
        <span className="size-[3px] bg-[#aaa]" />
        <span className="size-[3px] bg-[#aaa]" />
        <span className="size-[3px] bg-[#aaa]" />
      </div>
      <button aria-label="New sheet" className="ml-auto mt-[7px]">
        <svg width="18" height="20" viewBox="0 0 18 20" fill="none" stroke="#777"><ellipse cx="9" cy="10" rx="8.300" ry="9.300" strokeWidth="1.300" /><path d="M4.500 10h9M9 5.500v9" strokeWidth="2" /></svg>
      </button>
      <button className="-mt-px ml-9 h-[31px] w-[65px] border-x border-b-2 border-x-[#ababab] border-b-[#217346] bg-white font-['Liberation_Sans','DejaVu_Sans_Condensed',sans-serif] text-[17px] font-bold leading-7 text-[#217346]">
        <bdi dir="rtl">ورقة1</bdi>
      </button>
      <div className="flex h-[33px] w-[94px] items-center justify-end gap-6 pr-4">
        <svg width="6" height="9" viewBox="0 0 6 9"><path d="M6 0v9L1 4.500z" fill="#bbb" /></svg>
        <svg width="6" height="9" viewBox="0 0 6 9"><path d="M0 0v9l5-4.500z" fill="#bbb" /></svg>
      </div>
    </div>
  )
}

function StatusBar() {
  return (
    <footer className="flex h-[31px] items-center border-t border-[#c6c6c6] bg-[#f1f1f1] pr-1 text-sm text-[#555]">
      <span className="-ml-1.5">Ready</span>
      <button aria-label="Normal view" className="ml-auto flex h-full w-[38px] items-center justify-center bg-[#c9c9c9]">
        <svg width="18" height="18" viewBox="0 0 18 18" fill="none" stroke="#666"><path d="M0.500 0.500h17v17h-17zM0.500 4.500h17M0.500 9h17M0.500 13.500h17M6 0v18M12 0v18" /></svg>
      </button>
      <button aria-label="Page layout view" className="ml-3">
        <svg width="18" height="19" viewBox="0 0 18 19" fill="none" stroke="#666"><path d="M0.500 0.500h17v18h-17zM4.500 3.500h9v12h-9zM6.500 6.500h5M6.500 9.500h5M6.500 12.500h5" /></svg>
      </button>
      <button aria-label="Page break view" className="ml-[22px]">
        <svg width="18" height="19" viewBox="0 0 18 19" fill="none" stroke="#666"><path d="M0.500 0.500h17v18h-17zM0.500 11.500h11v-11M6.500 0.500v11" /></svg>
      </button>
      <button aria-label="Zoom out" className="ml-4"><svg width="11" height="4" viewBox="0 0 11 4"><path d="M0 2h11" stroke="#555" strokeWidth="3" /></svg></button>
      <label className="relative ml-1 flex w-[135px] items-center">
        <span className="absolute h-px w-full bg-[#aaa]" />
        <span className="absolute left-1/2 h-2 w-px bg-[#aaa]" />
        <input
          type="range"
          aria-label="Zoom"
          min={10}
          max={190}
          defaultValue={27}
          className="relative h-4 w-full appearance-none bg-transparent [&::-webkit-slider-thumb]:h-4 [&::-webkit-slider-thumb]:w-[5px] [&::-webkit-slider-thumb]:appearance-none [&::-webkit-slider-thumb]:bg-[#555]"
        />
      </label>
      <button aria-label="Zoom in" className="ml-1"><svg width="12" height="14" viewBox="0 0 12 14"><path d="M0 7h12M6 0v14" stroke="#555" strokeWidth="3" /></svg></button>
      <span className="ml-3.5 w-[30px]">27%</span>
    </footer>
  )
}

export default function App() {
  return (
    <div className="relative flex min-h-screen flex-col overflow-hidden bg-[#e6e6e6] font-['Open_Sans',sans-serif] text-[15px] text-[#444]">
      <TitleBar />

      {/* Ribbon */}
      <div className="flex h-[133px] border-b border-[#d2d2d2] bg-[#f1f1f1]">
        <ClipboardGroup />
        <FontGroup />
        <AlignmentGroup />
        <NumberGroup />
        <StylesGroup />
        <CellsGroup />
        <EditingGroup />
        <button aria-label="Collapse ribbon" className="ml-auto flex items-end pb-2">
          <svg width="11" height="8" viewBox="0 0 11 8" fill="none" stroke="#555" strokeWidth="2"><path d="M1 7l5-6 5 6" /></svg>
        </button>
      </div>

      <FormulaBar />

      <div className="flex flex-1">
        {/* Vertical scrollbar */}
        <div className="flex w-3.5 shrink-0 flex-col bg-[#dadada] pr-0.5 pt-0.5">
          <button aria-label="Scroll up" className="h-6 border border-l-0 border-[#c6c6c6] bg-white"><svg width="8" height="6" viewBox="0 0 8 6"><path d="M-4 6h9L1 0z" fill="#555" /></svg></button>
          <div className="h-[212px] border border-l-0 border-[#ababab] bg-white" />
          <button aria-label="Scroll down" className="mt-auto h-6 border border-l-0 border-[#c6c6c6] bg-white"><svg width="8" height="6" viewBox="0 0 8 6"><path d="M-4 0h9L1 6z" fill="#555" /></svg></button>
        </div>
        <Sheet />
      </div>

      <BottomBar />
      <StatusBar />

      <div dir="rtl" className="pointer-events-none absolute bottom-4 left-[748px] flex w-[204px] items-center justify-center font-['DejaVu_Sans',sans-serif] text-[48px] font-bold leading-[52px] text-black/8">
        <span>خـ</span>
        <span className="text-[40px]">5</span>
        <span>ـسات</span>
      </div>
    </div>
  )
}
